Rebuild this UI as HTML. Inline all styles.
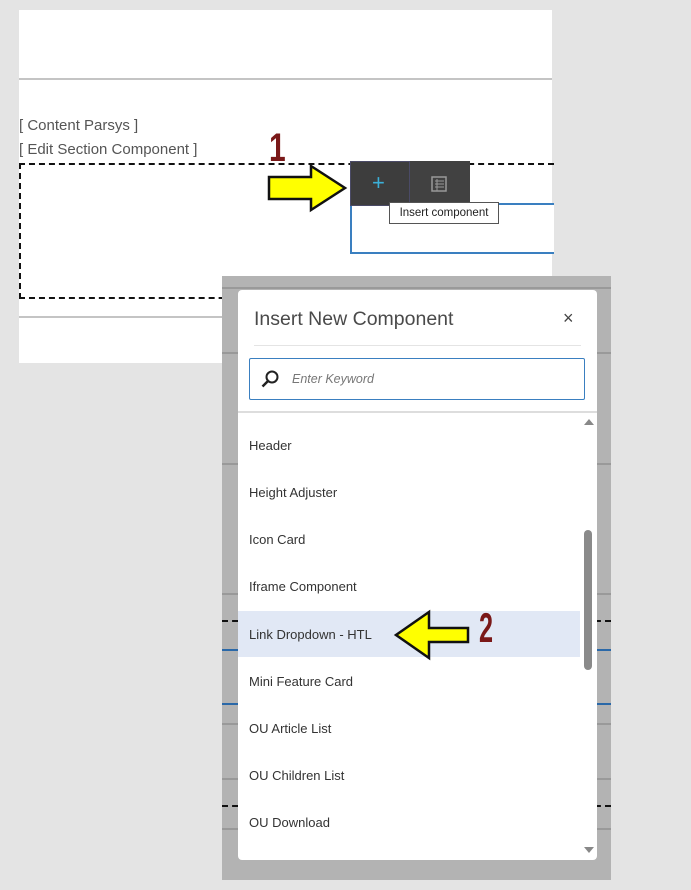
<!DOCTYPE html>
<html><head><style>
body{margin:0;width:691px;height:890px;background:#e4e4e4;position:relative;overflow:hidden;font-family:"Liberation Sans",sans-serif}
.a{position:absolute}
.it{position:absolute;left:11px;font-size:13px;color:#333}
</style></head><body>
<div class="a" style="left:19px;top:10px;width:533px;height:353px;background:#fff"></div>
<div class="a" style="left:19px;top:78px;width:533px;height:2px;background:#c4c4c4"></div>
<div class="a" style="left:19px;top:316px;width:533px;height:2px;background:#c4c4c4"></div>
<div class="a" style="left:19px;top:117px;font-size:15px;color:#555">[ Content Parsys ]</div>
<div class="a" style="left:19px;top:141px;font-size:15px;color:#555">[ Edit Section Component ]</div>
<div class="a" style="left:19px;top:163px;width:533px;height:132px;border:2px dashed #111;border-right:none;box-sizing:content-box"></div>
<div class="a" style="left:350px;top:203px;width:202px;height:47px;border:2px solid #3a7fc0;border-right:none;background:#fff"></div>
<div class="a" style="left:350px;top:161px;width:120px;height:44px;background:#414141"></div>
<div class="a" style="left:350px;top:161px;width:58px;height:43px;border:1px solid #4a4a66;background:#3d3d3d"></div>
<div class="a" style="left:372px;top:170px;font-size:22px;color:#3bb0d8">+</div>
<svg class="a" style="left:431px;top:176px" width="16" height="16"><rect x="1" y="1" width="14" height="14" fill="none" stroke="#999" stroke-width="1.5"/><path d="M4 5h9M4 8h9M4 11h9M6 3v12" stroke="#999"/></svg>
<div class="a" style="left:389px;top:202px;width:108px;height:20px;background:#fff;border:1px solid #555;font-size:11.5px;line-height:20px;text-align:center;color:#222">Insert component</div>
<svg class="a" style="left:266px;top:163px" width="82" height="50"><path d="M3 14h42V3l34 22-34 22V36H3z" fill="#ffff00" stroke="#111" stroke-width="2.5"/></svg>
<div class="a" style="left:269px;top:126px;font-size:40px;font-weight:bold;color:#7a1818;transform:scaleX(.75);transform-origin:left">1</div>
<div class="a" style="left:222px;top:276px;width:389px;height:604px;background:#b3b3b3"></div>
<div class="a" style="left:222px;top:287px;width:389px;height:2px;background:#999"></div>
<div class="a" style="left:222px;top:352px;width:389px;height:2px;background:#999"></div>
<div class="a" style="left:222px;top:463px;width:389px;height:2px;background:#999"></div>
<div class="a" style="left:222px;top:593px;width:389px;height:2px;background:#999"></div>
<div class="a" style="left:222px;top:620px;width:389px;height:2px;border-top:2px dashed #111"></div>
<div class="a" style="left:222px;top:649px;width:389px;height:2px;background:#2a68a8"></div>
<div class="a" style="left:222px;top:703px;width:389px;height:2px;background:#2a68a8"></div>
<div class="a" style="left:222px;top:723px;width:389px;height:2px;background:#999"></div>
<div class="a" style="left:222px;top:778px;width:389px;height:2px;background:#999"></div>
<div class="a" style="left:222px;top:805px;width:389px;height:2px;border-top:2px dashed #111"></div>
<div class="a" style="left:222px;top:828px;width:389px;height:2px;background:#999"></div>
<div class="a" style="left:238px;top:290px;width:359px;height:570px;background:#fff;border-radius:4px">
 <div class="a" style="left:16px;top:18px;font-size:19.5px;color:#4a4a4a">Insert New Component</div>
 <div class="a" style="left:325px;top:18px;font-size:18px;color:#444">×</div>
 <div class="a" style="left:16px;top:55px;width:327px;height:1px;background:#e4e4e4"></div>
 <div class="a" style="left:11px;top:68px;width:334px;height:40px;border:1px solid #3a7fc0;border-radius:2px"></div>
 <svg class="a" style="left:22px;top:79px" width="20" height="20"><circle cx="12" cy="8" r="5.5" fill="none" stroke="#222" stroke-width="2"/><path d="M8 12L2.5 17.5" stroke="#222" stroke-width="2.5"/></svg>
 <div class="a" style="left:54px;top:82px;font-size:12.5px;color:#777;font-style:italic">Enter Keyword</div>
 <div class="a" style="left:0;top:121px;width:359px;height:2px;background:#ddd"></div>
 <div class="a" style="left:0;top:321px;width:342px;height:46px;background:#e1e8f5"></div>
 <div class="it" style="top:148px">Header</div>
 <div class="it" style="top:195px">Height Adjuster</div>
 <div class="it" style="top:242px">Icon Card</div>
 <div class="it" style="top:289px">Iframe Component</div>
 <div class="it" style="top:337px">Link Dropdown - HTL</div>
 <div class="it" style="top:384px">Mini Feature Card</div>
 <div class="it" style="top:431px">OU Article List</div>
 <div class="it" style="top:478px">OU Children List</div>
 <div class="it" style="top:525px">OU Download</div>
 <div class="a" style="left:346px;top:240px;width:8px;height:140px;background:#8a8a8a;border-radius:4px"></div>
 <div class="a" style="left:346px;top:129px;width:0;height:0;border:5px solid transparent;border-bottom:6px solid #888;border-top:none"></div>
 <div class="a" style="left:346px;top:557px;width:0;height:0;border:5px solid transparent;border-top:6px solid #888;border-bottom:none"></div>
</div>
<svg class="a" style="left:393px;top:609px" width="78" height="52"><path d="M75 19H36V3L3 26l33 23V33h39z" fill="#ffff00" stroke="#111" stroke-width="2.5"/></svg>
<div class="a" style="left:479px;top:604px;font-size:42px;font-weight:bold;color:#7a1818;transform:scaleX(.6);transform-origin:left">2</div>
</body></html>
